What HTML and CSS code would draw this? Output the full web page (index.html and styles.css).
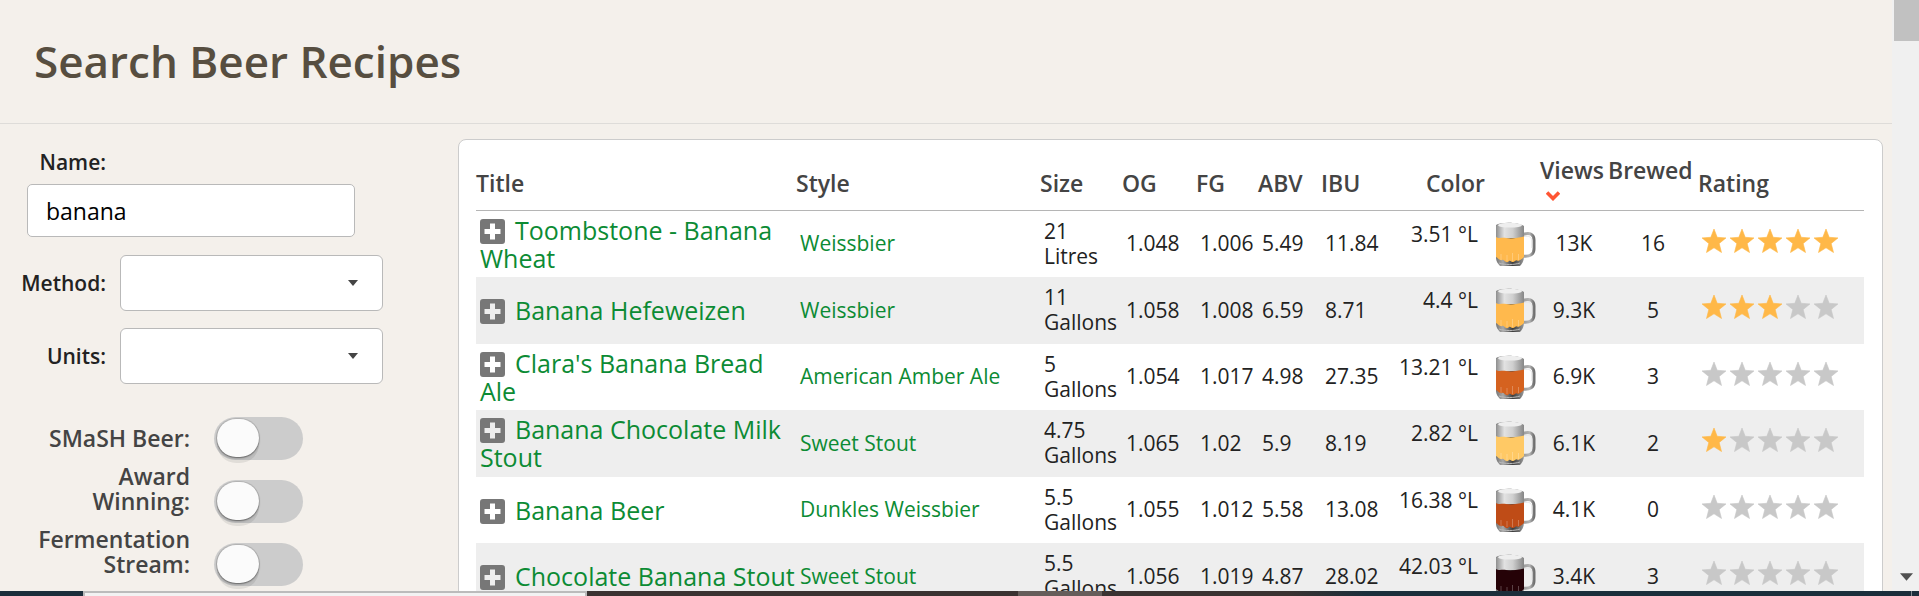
FILE: index.html
```html
<!DOCTYPE html>
<html lang="en">
<head>
    <meta charset="UTF-8">
    <meta name="viewport" content="width=device-width, initial-scale=1.0">
    <title>Search Beer Recipes</title>
    <link rel="stylesheet" href="styles.css">
</head>
<body>
    <!-- shared icons -->
    <svg class="sprite" width="0" height="0" aria-hidden="true">
        <defs>
            <linearGradient id="foamGrad" x1="0" x2="1" y1="0" y2="0">
                <stop offset="0" stop-color="#8e8e8e"/>
                <stop offset="0.3" stop-color="#e2e2e2"/>
                <stop offset="0.6" stop-color="#cfcfcf"/>
                <stop offset="1" stop-color="#868686"/>
            </linearGradient>
            <linearGradient id="baseGrad" x1="0" x2="1" y1="0" y2="0">
                <stop offset="0" stop-color="#777"/>
                <stop offset="0.25" stop-color="#a9a9a9"/>
                <stop offset="0.6" stop-color="#3c3c3c"/>
                <stop offset="1" stop-color="#999"/>
            </linearGradient>
            <linearGradient id="handleGrad" x1="0" x2="1" y1="0" y2="0">
                <stop offset="0" stop-color="#999"/>
                <stop offset="0.6" stop-color="#b4b4b4"/>
                <stop offset="1" stop-color="#707070"/>
            </linearGradient>
            <symbol id="mug" viewBox="0 0 40 44">
                <path d="M27 12.500C34 10 38 12.500 38 18V27C38 32 34 35 27 34" fill="none" stroke="url(#handleGrad)" stroke-width="3"/>
                <path d="M28 14.500C33 13.500 35.800 15 35.800 19V26" fill="none" stroke="#e6e6e6" stroke-width="1"/>
                <path d="M0 3C5 0 22 0 27 4L28 34C28 39 26 42 24 44H4C2 42 0 39 0 36Z" fill="url(#baseGrad)"/>
                <path d="M0 3.500C6 0 22 0 28 4V16H0Z" fill="url(#foamGrad)"/>
                <ellipse cx="14" cy="3.200" rx="12" ry="2.400" fill="#eee"/>
                <path d="M0 15C3 17 7 15 10 16C15 17 22 16 28 14.500V35C25 38 24 38 22 39C20 37 19 40 17 40C15 40 14 37 12 40C9 41 8 37 6 38C4 39 2 36 0 35Z" fill="currentColor"/>
                <path d="M5 38V32M11 39V33M16.500 39V31M22.500 38V32" stroke="#fff" stroke-opacity="0.250" stroke-width="1"/>
                <path d="M3 41C9 43 18 43 24 41" fill="none" stroke="#bbb" stroke-width="1"/>
            </symbol>
            <symbol id="star" viewBox="0 0 24 26">
                <path d="M12 1L15.200 9.300L24 9.900L17.200 15.500L19.500 24.500L12 19.800L4.500 24.500L6.800 15.500L0 9.900L8.800 9.300Z" fill="currentColor" stroke="currentColor" stroke-width="0.600"/>
            </symbol>
            <symbol id="plus" viewBox="0 0 25 25">
                <path fill-rule="evenodd" d="M3 0H22A3 3 0 0 1 25 3V22A3 3 0 0 1 22 25H3A3 3 0 0 1 0 22V3A3 3 0 0 1 3 0ZM10 4.500V10H4.500V15H10V20.500H15V15H20.500V10H15V4.500Z" fill="#777"/>
            </symbol>
        </defs>
    </svg>

    <div class="window">
        <div class="page">
            <header class="page-header">
                <h1>Search Beer Recipes</h1>
            </header>

            <main class="content">
                <form class="filters">
                    <div class="name-group">
                        <label for="name">Name:</label>
                        <input type="text" id="name" name="name" value="banana">
                    </div>

                    <div class="form-group">
                        <label for="method">Method:</label>
                        <div class="select-wrap">
                            <select id="method" name="method">
                                <option value=""></option>
                            </select>
                            <svg class="caret" viewBox="0 0 10 6"><path d="M0 0H10L5 6Z" fill="#444"/></svg>
                        </div>
                    </div>

                    <div class="form-group">
                        <label for="units">Units:</label>
                        <div class="select-wrap">
                            <select id="units" name="units">
                                <option value=""></option>
                            </select>
                            <svg class="caret" viewBox="0 0 10 6"><path d="M0 0H10L5 6Z" fill="#444"/></svg>
                        </div>
                    </div>

                    <div class="toggles">
                        <div class="toggle-group">
                            <label for="smash">SMaSH Beer:</label>
                            <input type="checkbox" class="toggle" id="smash">
                        </div>
                        <div class="toggle-group">
                            <label for="award">Award Winning:</label>
                            <input type="checkbox" class="toggle" id="award">
                        </div>
                        <div class="toggle-group">
                            <label for="stream">Fermentation Stream:</label>
                            <input type="checkbox" class="toggle" id="stream">
                        </div>
                    </div>
                </form>

                <section class="results">
                    <table>
                        <colgroup>
                            <col>
                            <col class="col-style">
                            <col class="col-size">
                            <col class="col-og">
                            <col class="col-fg">
                            <col class="col-abv">
                            <col class="col-ibu">
                            <col class="col-color">
                            <col class="col-views">
                            <col class="col-brewed">
                            <col class="col-rating">
                        </colgroup>
                        <thead>
                            <tr>
                                <th>Title</th>
                                <th>Style</th>
                                <th>Size</th>
                                <th>OG</th>
                                <th>FG</th>
                                <th>ABV</th>
                                <th>IBU</th>
                                <th class="color-head">Color</th>
                                <th>Views<span class="sort"><svg class="sort-icon" viewBox="0 0 14 10"><path d="M1 1.500L7 7.500L13 1.500" fill="none" stroke="#ff5533" stroke-width="3.600"/></svg></span></th>
                                <th>Brewed<span class="sort"></span></th>
                                <th>Rating</th>
                            </tr>
                        </thead>
                        <tbody>
                            <tr>
                                <td class="title"><svg class="plus"><use href="#plus"/></svg><a href="#">Toombstone - Banana Wheat</a></td>
                                <td><a href="#">Weissbier</a></td>
                                <td>21 Litres</td>
                                <td>1.048</td>
                                <td>1.006</td>
                                <td>5.49</td>
                                <td>11.84</td>
                                <td><div class="color"><span>3.51 °L</span><svg class="mug gold"><use href="#mug"/></svg></div></td>
                                <td class="num">13K</td>
                                <td class="num">16</td>
                                <td><div class="stars"><svg class="on"><use href="#star"/></svg><svg class="on"><use href="#star"/></svg><svg class="on"><use href="#star"/></svg><svg class="on"><use href="#star"/></svg><svg class="on"><use href="#star"/></svg></div></td>
                            </tr>
                            <tr>
                                <td class="title"><svg class="plus"><use href="#plus"/></svg><a href="#">Banana Hefeweizen</a></td>
                                <td><a href="#">Weissbier</a></td>
                                <td>11 Gallons</td>
                                <td>1.058</td>
                                <td>1.008</td>
                                <td>6.59</td>
                                <td>8.71</td>
                                <td><div class="color"><span>4.4 °L</span><svg class="mug gold"><use href="#mug"/></svg></div></td>
                                <td class="num">9.3K</td>
                                <td class="num">5</td>
                                <td><div class="stars"><svg class="on"><use href="#star"/></svg><svg class="on"><use href="#star"/></svg><svg class="on"><use href="#star"/></svg><svg><use href="#star"/></svg><svg><use href="#star"/></svg></div></td>
                            </tr>
                            <tr>
                                <td class="title"><svg class="plus"><use href="#plus"/></svg><a href="#">Clara's Banana Bread Ale</a></td>
                                <td><a href="#">American Amber Ale</a></td>
                                <td>5 Gallons</td>
                                <td>1.054</td>
                                <td>1.017</td>
                                <td>4.98</td>
                                <td>27.35</td>
                                <td><div class="color"><span>13.21 °L</span><svg class="mug amber"><use href="#mug"/></svg></div></td>
                                <td class="num">6.9K</td>
                                <td class="num">3</td>
                                <td><div class="stars"><svg><use href="#star"/></svg><svg><use href="#star"/></svg><svg><use href="#star"/></svg><svg><use href="#star"/></svg><svg><use href="#star"/></svg></div></td>
                            </tr>
                            <tr>
                                <td class="title"><svg class="plus"><use href="#plus"/></svg><a href="#">Banana Chocolate Milk Stout</a></td>
                                <td><a href="#">Sweet Stout</a></td>
                                <td>4.75 Gallons</td>
                                <td>1.065</td>
                                <td>1.02</td>
                                <td>5.9</td>
                                <td>8.19</td>
                                <td><div class="color"><span>2.82 °L</span><svg class="mug pale"><use href="#mug"/></svg></div></td>
                                <td class="num">6.1K</td>
                                <td class="num">2</td>
                                <td><div class="stars"><svg class="on"><use href="#star"/></svg><svg><use href="#star"/></svg><svg><use href="#star"/></svg><svg><use href="#star"/></svg><svg><use href="#star"/></svg></div></td>
                            </tr>
                            <tr>
                                <td class="title"><svg class="plus"><use href="#plus"/></svg><a href="#">Banana Beer</a></td>
                                <td><a href="#">Dunkles Weissbier</a></td>
                                <td>5.5 Gallons</td>
                                <td>1.055</td>
                                <td>1.012</td>
                                <td>5.58</td>
                                <td>13.08</td>
                                <td><div class="color"><span>16.38 °L</span><svg class="mug copper"><use href="#mug"/></svg></div></td>
                                <td class="num">4.1K</td>
                                <td class="num">0</td>
                                <td><div class="stars"><svg><use href="#star"/></svg><svg><use href="#star"/></svg><svg><use href="#star"/></svg><svg><use href="#star"/></svg><svg><use href="#star"/></svg></div></td>
                            </tr>
                            <tr>
                                <td class="title"><svg class="plus"><use href="#plus"/></svg><a href="#">Chocolate Banana Stout</a></td>
                                <td><a href="#">Sweet Stout</a></td>
                                <td>5.5 Gallons</td>
                                <td>1.056</td>
                                <td>1.019</td>
                                <td>4.87</td>
                                <td>28.02</td>
                                <td><div class="color"><span>42.03 °L</span><svg class="mug black"><use href="#mug"/></svg></div></td>
                                <td class="num">3.4K</td>
                                <td class="num">3</td>
                                <td><div class="stars"><svg><use href="#star"/></svg><svg><use href="#star"/></svg><svg><use href="#star"/></svg><svg><use href="#star"/></svg><svg><use href="#star"/></svg></div></td>
                            </tr>
                        </tbody>
                    </table>
                </section>
            </main>
        </div>

        <div class="scrollbar">
            <div class="scroll-thumb"></div>
            <svg class="scroll-down" viewBox="0 0 14 8"><path d="M0 0H14L7 8Z" fill="#505050"/></svg>
        </div>
    </div>

    <div class="taskbar">
        <div class="task-search"></div>
        <div class="task-apps"><div class="task-active"></div></div>
        <div class="task-tray"></div>
    </div>
</body>
</html>
```
FILE: styles.css
```css
* {
    box-sizing: border-box;
}
body {
    display: flex;
    flex-direction: column;
    height: 100vh;
    margin: 0;
    overflow: hidden;
    background: #f4f0eb;
    color: #222;
    font-family: "Open Sans", "Noto Sans", sans-serif;
    font-size: 21px;
    line-height: 25px;
}
.sprite {
    position: absolute;
}
.window {
    display: flex;
    flex: 1;
    min-height: 0;
}
.page {
    flex: 1;
    min-width: 0;
    overflow: hidden;
}
.page-header {
    padding: 31px 34px 32px;
    border-bottom: 1px solid #dedcd9;
}
h1 {
    margin: 0;
    color: #574e40;
    font-size: 44px;
    font-weight: 600;
    line-height: 60px;
}
.content {
    display: flex;
    align-items: flex-start;
    padding: 15px 9px 0 0;
}

/* filters */
.filters {
    width: 458px;
    flex-shrink: 0;
    padding-top: 11px;
}
.filters label {
    width: 106px;
    text-align: right;
    font-weight: 600;
}
.name-group label {
    display: block;
}
.name-group input {
    display: block;
    width: 328px;
    height: 53px;
    margin: 9px 0 18px 27px;
    padding: 0 18px;
    border: 1px solid #b9b9b9;
    border-radius: 5px;
    background: #fff;
    color: #000;
    font-family: inherit;
    font-size: 23px;
}
.form-group {
    display: flex;
    align-items: center;
    gap: 14px;
    margin-top: 17px;
}
.select-wrap {
    position: relative;
}
select {
    display: block;
    width: 263px;
    height: 56px;
    appearance: none;
    border: 1px solid #b9b9b9;
    border-radius: 6px;
    background: #fff;
    font-family: inherit;
    font-size: 21px;
}
.caret {
    position: absolute;
    top: 25px;
    right: 25px;
    width: 10px;
    height: 6px;
    pointer-events: none;
}
.toggles {
    display: flex;
    flex-direction: column;
    margin-top: 13px;
}
.toggle-group {
    display: flex;
    align-items: flex-end;
    gap: 24px;
    height: 63px;
}
.filters .toggles label {
    width: 190px;
    padding: 0 0 9px 30px;
    color: #444;
    font-size: 23px;
}
.toggle {
    width: 89px;
    height: 43px;
    margin: 0;
    padding: 2px 3px;
    appearance: none;
    border-radius: 22px;
    background: #ccc;
}
.toggle::before {
    content: "";
    display: block;
    width: 42px;
    height: 38px;
    border-radius: 19px;
    background: #fbfbfb;
    box-shadow: 0 0 0 1px rgba(0, 0, 0, 0.1), 0 1px 2px rgba(0, 0, 0, 0.4), 0 6px 0 rgba(0, 0, 0, 0.08);
}

/* results */
.results {
    flex: 1;
    min-width: 0;
    padding: 18px 18px 18px 17px;
    border: 1px solid #ccc;
    border-radius: 8px;
    background: #fff;
}
table {
    width: 100%;
    table-layout: fixed;
    border-collapse: collapse;
}
.col-style {
    width: 244px;
}
.col-size {
    width: 82px;
}
.col-og {
    width: 74px;
}
.col-fg {
    width: 62px;
}
.col-abv {
    width: 63px;
}
.col-ibu {
    width: 60px;
}
.col-color {
    width: 159px;
}
.col-views {
    width: 68px;
}
.col-brewed {
    width: 90px;
}
.col-rating {
    width: 166px;
}
thead tr {
    border-bottom: 1px solid #b5b5b5;
}
th {
    height: 52px;
    padding: 0 0 2px;
    color: #444;
    font-size: 23px;
    font-weight: 600;
    text-align: left;
}
th.color-head {
    padding-right: 55px;
    text-align: right;
}
.sort {
    display: block;
    height: 25px;
    padding: 8px 0 0 6px;
}
.sort-icon {
    display: block;
    width: 14px;
    height: 10px;
}
td {
    height: 66px;
    padding: 0 4px;
}
tbody tr:nth-child(even) {
    background: #eee;
}
tbody tr:nth-child(even) td {
    height: 67px;
}
a {
    color: #0c8b34;
    text-decoration: none;
}
.title {
    padding-right: 0;
    font-size: 25px;
    line-height: 28px;
}
.plus {
    width: 25px;
    height: 25px;
    margin-right: 10px;
    vertical-align: -4px;
}
.num {
    text-align: center;
}
.color {
    display: flex;
    justify-content: flex-end;
    gap: 18px;
}
.mug {
    width: 40px;
    height: 44px;
}
.gold {
    color: #ffb94d;
}
.pale {
    color: #ffc965;
}
.amber {
    color: #d5621f;
}
.copper {
    color: #bf4c17;
}
.black {
    color: #250207;
}
.stars {
    display: flex;
    gap: 4px;
    padding-bottom: 6px;
}
.stars svg {
    width: 24px;
    height: 26px;
    color: #c8c8c8;
}
.stars .on {
    color: #ffb848;
}

/* window chrome */
.scrollbar {
    display: flex;
    flex-direction: column;
    justify-content: space-between;
    width: 27px;
    padding: 0 0 10px 2px;
    background: #f0f0f0;
}
.scroll-thumb {
    height: 41px;
    background: #c1c1c1;
}
.scroll-down {
    width: 13px;
    height: 8px;
    margin-left: 6px;
}
.taskbar {
    display: flex;
    height: 5px;
    background: #1b2e3b;
}
.task-search {
    width: 504px;
    margin-left: 83px;
    border: 2px solid #bbb;
    border-bottom: 0;
    background: #f2f2f2;
}
.task-apps {
    width: 780px;
    padding-left: 431px;
    background: linear-gradient(90deg, #3a3231 90%, #1b2e3b);
}
.task-active {
    width: 84px;
    height: 5px;
    background: #655d5a;
}
.task-tray {
    flex: 1;
    margin-right: 7px;
    border-right: 1px solid #80888e;
}
```
